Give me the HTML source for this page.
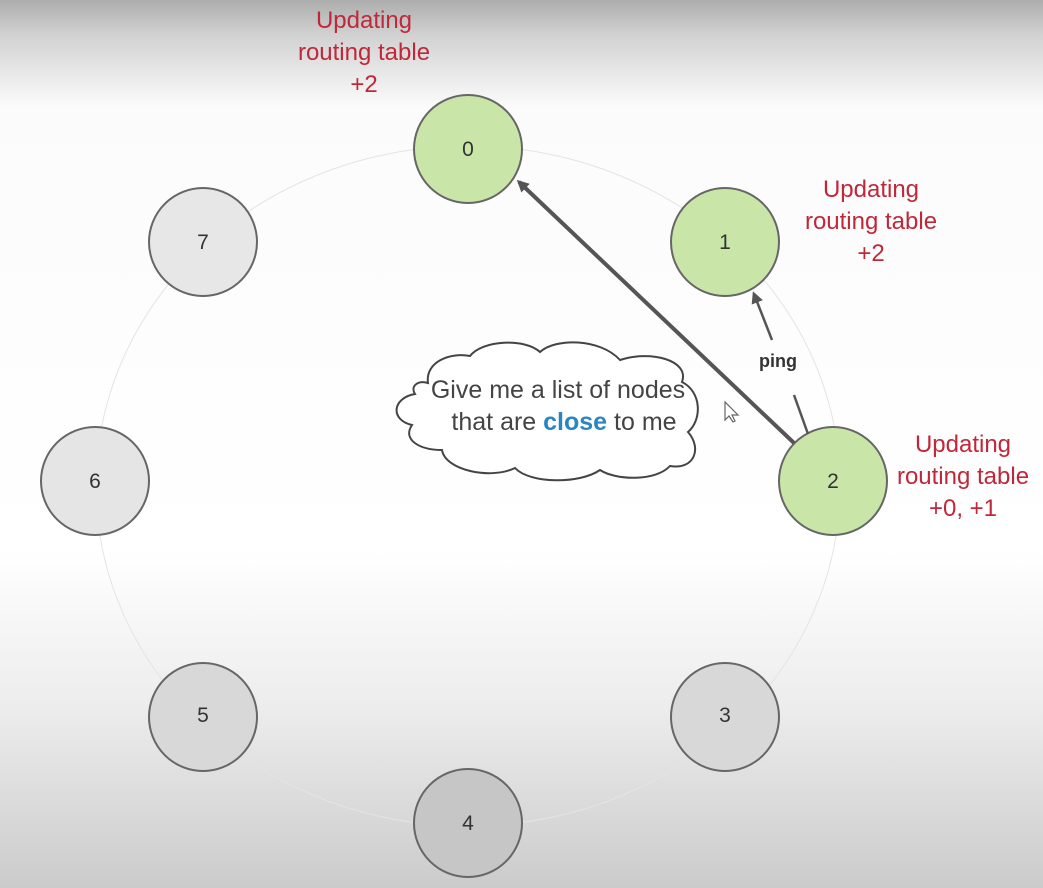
<!DOCTYPE html>
<html><head><meta charset="utf-8"><style>
html,body{margin:0;padding:0;width:1043px;height:888px;overflow:hidden;background:#fff}
svg{display:block}
text{font-family:"Liberation Sans",sans-serif}
</style></head><body>
<svg width="1043" height="888" viewBox="0 0 1043 888">
<defs>
<linearGradient id="bg" x1="0" y1="0" x2="0" y2="1">
<stop offset="0" stop-color="#adadad"/>
<stop offset="0.04" stop-color="#d2d2d2"/>
<stop offset="0.12" stop-color="#fbfbfb"/>
<stop offset="0.62" stop-color="#ffffff"/>
<stop offset="0.8" stop-color="#ececec"/>
<stop offset="1" stop-color="#cbcbcb"/>
</linearGradient>
<marker id="ah" markerWidth="12" markerHeight="12" refX="9" refY="6" orient="auto" markerUnits="userSpaceOnUse">
<path d="M0,0 L12,6 L0,12 z" fill="#555"/>
</marker>
</defs>
<rect width="1043" height="888" fill="url(#bg)"/>
<ellipse cx="468" cy="486" rx="372" ry="340" fill="none" stroke="#e4e4e4" stroke-width="1"/>
<g stroke="#666" stroke-width="2">
<circle cx="203" cy="242" r="54" fill="#e7e7e7"/>
<circle cx="95" cy="481" r="54" fill="#e5e5e5"/>
<circle cx="203" cy="717" r="54" fill="#d8d8d8"/>
<circle cx="725" cy="717" r="54" fill="#d8d8d8"/>
<circle cx="468" cy="823" r="54" fill="#c6c6c6"/>
<circle cx="468" cy="149" r="54" fill="#c9e6a8"/>
<circle cx="725" cy="242" r="54" fill="#c9e6a8"/>
<circle cx="833" cy="481" r="54" fill="#c9e6a8"/>
</g>
<g font-size="21" fill="#333" text-anchor="middle">
<text x="468" y="156">0</text>
<text x="725" y="249">1</text>
<text x="833" y="488">2</text>
<text x="725" y="722">3</text>
<text x="468" y="830">4</text>
<text x="203" y="722">5</text>
<text x="95" y="488">6</text>
<text x="203" y="249">7</text>
</g>
<line x1="794" y1="443" x2="519" y2="182" stroke="#555" stroke-width="4" marker-end="url(#ah)"/>
<line x1="808" y1="434" x2="794" y2="395" stroke="#555" stroke-width="2.5"/>
<line x1="772" y1="340" x2="754" y2="294" stroke="#555" stroke-width="2.5" marker-end="url(#ah)"/>
<text x="778" y="367" font-size="18" font-weight="bold" fill="#333" text-anchor="middle">ping</text>
<path d="M428,383 C425,362 450,352 470,356 C482,340 525,338 540,352 C555,338 600,338 620,360 C650,350 690,360 682,382 C702,392 702,420 688,432 C702,448 695,470 670,466 C655,482 615,480 600,470 C580,484 530,484 515,468 C490,480 445,470 442,450 C420,450 402,440 412,425 C390,420 392,398 415,394 C410,386 418,380 428,383 Z" fill="#fff" stroke="#444" stroke-width="2"/>
<g font-size="25" fill="#444" text-anchor="middle">
<text x="558" y="398">Give me a list of nodes</text>
<text x="564" y="430">that are <tspan fill="#2a86c2" font-weight="bold">close</tspan> to me</text>
</g>
<path d="M725,402 l0,18 l4,-4 l4,6 l2,-1 l-3,-6 l6,0 z" fill="#fff" stroke="#666" stroke-width="1.2"/>
<g font-size="24" fill="#c0283a" text-anchor="middle">
<text x="364" y="28">Updating</text>
<text x="364" y="60">routing table</text>
<text x="364" y="92">+2</text>
<text x="871" y="197">Updating</text>
<text x="871" y="229">routing table</text>
<text x="871" y="261">+2</text>
<text x="963" y="452">Updating</text>
<text x="963" y="484">routing table</text>
<text x="963" y="516">+0, +1</text>
</g>
</svg>
</body></html>
